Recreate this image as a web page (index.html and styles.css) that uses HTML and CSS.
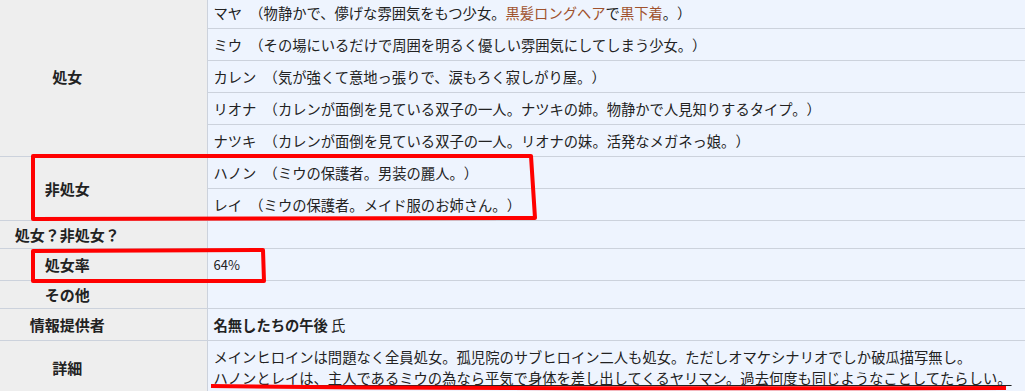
FILE: index.html
```html
<!DOCTYPE html>
<html lang="ja">
<head>
  <meta charset="UTF-8" />
  <title>処女率</title>
  <link rel="stylesheet" href="styles.css">
</head>
<body>

  <table class="info">
    <tbody>
      <tr>
        <th rowspan="5">処女</th>
        <td>マヤ （物静かで、儚げな雰囲気をもつ少女。<span class="hl">黒髪ロングヘア</span>で<span class="hl">黒下着</span>。）</td>
      </tr>
      <tr><td>ミウ （その場にいるだけで周囲を明るく優しい雰囲気にしてしまう少女。）</td></tr>
      <tr><td>カレン （気が強くて意地っ張りで、涙もろく寂しがり屋。）</td></tr>
      <tr><td>リオナ （カレンが面倒を見ている双子の一人。ナツキの姉。物静かで人見知りするタイプ。）</td></tr>
      <tr><td>ナツキ （カレンが面倒を見ている双子の一人。リオナの妹。活発なメガネっ娘。）</td></tr>
      <tr>
        <th rowspan="2">非処女</th>
        <td>ハノン （ミウの保護者。男装の麗人。）</td>
      </tr>
      <tr><td>レイ （ミウの保護者。メイド服のお姉さん。）</td></tr>
      <tr class="short">
        <th>処女？非処女？</th>
        <td></td>
      </tr>
      <tr>
        <th>処女率</th>
        <td class="num">64%</td>
      </tr>
      <tr class="short">
        <th>その他</th>
        <td></td>
      </tr>
      <tr>
        <th>情報提供者</th>
        <td class="by"><strong>名無したちの午後</strong> 氏</td>
      </tr>
      <tr>
        <th>詳細</th>
        <td>メインヒロインは問題なく全員処女。孤児院のサブヒロイン二人も処女。ただしオマケシナリオでしか破瓜描写無し。<br><u>ハノンとレイは、主人であるミウの為なら平気で身体を差し出してくるヤリマン。過去何度も同じようなことしてたらしい。</u></td>
      </tr>
    </tbody>
  </table>

  <!-- red pen marks drawn over the table -->
  <svg class="marks" width="1025" height="391" viewBox="0 0 1025 391">
    <path d="M33 156 L531 156 L535 218 L33 219 Z" />
    <path d="M33 251 L263 250 L264 281 L33 281 Z" />
    <path d="M211 386 Q 420 389 1006 388" />
  </svg>

</body>
</html>
```

FILE: styles.css
```css
* {
  box-sizing: border-box;
}
body {
  margin: 0;
  background: #eef4fe;
  font-family: "Noto Sans CJK JP", "Noto Sans", sans-serif;
  font-size: 14px;
  color: #222;
  overflow: hidden;
  text-spacing-trim: space-all;
}
.info {
  width: 100%;
  border-collapse: collapse;
  margin-top: -4px;
  line-height: 21px;
}
.info th, .info td {
  border: 1px solid #ccd2dc;
}
.info th {
  width: 207px;
  background: #eeeeee;
  font-size: 15px;
  font-weight: bold;
  text-align: center;
  padding: 5px 85px 5px 13px;
  white-space: nowrap;
  border-left: none;
}
.info td {
  background: #eef4fe;
  font-size: 14.3px;
  word-spacing: 4px;
  padding: 5px 6px;
  text-align: left;
  border-right: none;
}
.info .by {
  word-spacing: 0;
}
.info .short th {
  padding-top: 3px;
  padding-bottom: 3px;
}
.info .num {
  font-size: 13px;
}
.hl {
  color: #a0522d;
}
.marks {
  position: absolute;
  left: 0;
  top: 0;
  pointer-events: none;
}
.marks path {
  fill: none;
  stroke: #ff0000;
  stroke-width: 4;
  stroke-linejoin: round;
}
```
